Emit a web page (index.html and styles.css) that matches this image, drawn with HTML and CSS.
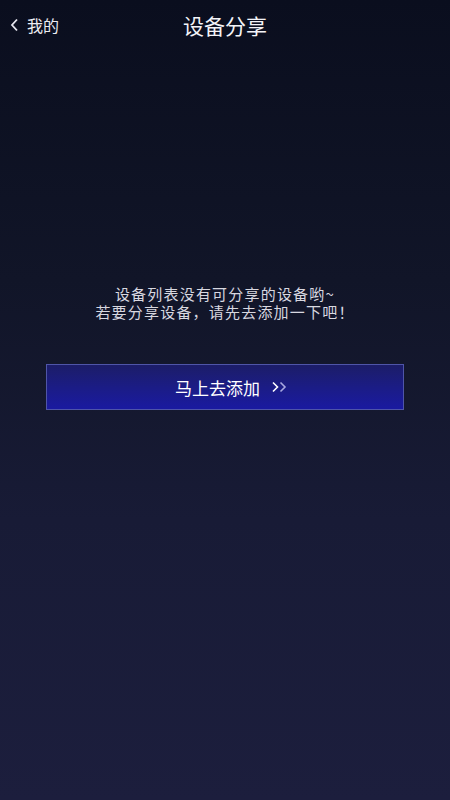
FILE: index.html
```html
<!DOCTYPE html>
<html lang="zh">
<head>
<meta charset="utf-8">
<link rel="stylesheet" href="styles.css">
</head>
<body>
<div class="screen">
  <header class="nav">
    <div class="back">
      <svg class="back-icon" width="9" height="14" viewBox="0 0 9 14"><path d="M7 1.5 L2 7 L7 12.5" fill="none" stroke="#e6e6ee" stroke-width="1.8"/></svg>
      <span>我的</span>
    </div>
    <h1 class="title">设备分享</h1>
  </header>
  <main class="content">
    <div class="message">
      <p class="line">设备列表没有可分享的设备哟~</p>
      <p class="line">若要分享设备，请先去添加一下吧！</p>
    </div>
    <button class="add-btn">
      <span>马上去添加</span>
      <svg class="chev" width="16" height="12" viewBox="0 0 16 12"><path d="M2 1.5 L6.5 6 L2 10.5" fill="none" stroke="#ffffff" stroke-width="1.6"/><path d="M9.5 1.5 L14 6 L9.5 10.5" fill="none" stroke="#a8a8e0" stroke-width="1.6"/></svg>
    </button>
  </main>
</div>
</body>
</html>
```
FILE: styles.css
```css
html, body {
  margin: 0;
  padding: 0;
}
body {
  width: 450px;
  height: 800px;
  overflow: hidden;
  font-family: "Noto Sans CJK SC", "Noto Sans", sans-serif;
  background: linear-gradient(180deg, #0a0e1e 0%, #111528 35%, #181b36 65%, #1c1e3d 100%);
  color: #fff;
}
.screen {
  height: 800px;
  display: flex;
  flex-direction: column;
}
.nav {
  position: relative;
  height: 50px;
  display: flex;
  align-items: center;
  justify-content: center;
}
.back {
  position: absolute;
  left: 10px;
  top: 13px;
  display: flex;
  align-items: center;
  gap: 8px;
  font-size: 16px;
  color: #ececf2;
  line-height: 24px;
}
.title {
  margin: 0;
  font-size: 21px;
  font-weight: 400;
  color: #f4f4f8;
  line-height: 26px;
  margin-top: -1px;
}
.content {
  display: flex;
  flex-direction: column;
  align-items: center;
  padding-top: 235px;
}
.message {
  display: flex;
  flex-direction: column;
  align-items: center;
}
.line {
  margin: 0;
  text-align: center;
  font-size: 15px;
  line-height: 18px;
  color: #d8d8e0;
  letter-spacing: 1.2px;
  white-space: nowrap;
}
.add-btn {
  margin-top: 43px;
  width: 358px;
  height: 46px;
  border: 1px solid #4f55a8;
  background: linear-gradient(180deg, #1c1d68 0%, #1b1c88 55%, #1a1aa0 100%);
  color: #ffffff;
  font-family: "Noto Sans CJK SC", "Noto Sans", sans-serif;
  font-size: 17px;
  display: flex;
  align-items: center;
  justify-content: center;
  gap: 11px;
  padding: 0 0 0 12px;
}
.chev {
  display: block;
}
```
